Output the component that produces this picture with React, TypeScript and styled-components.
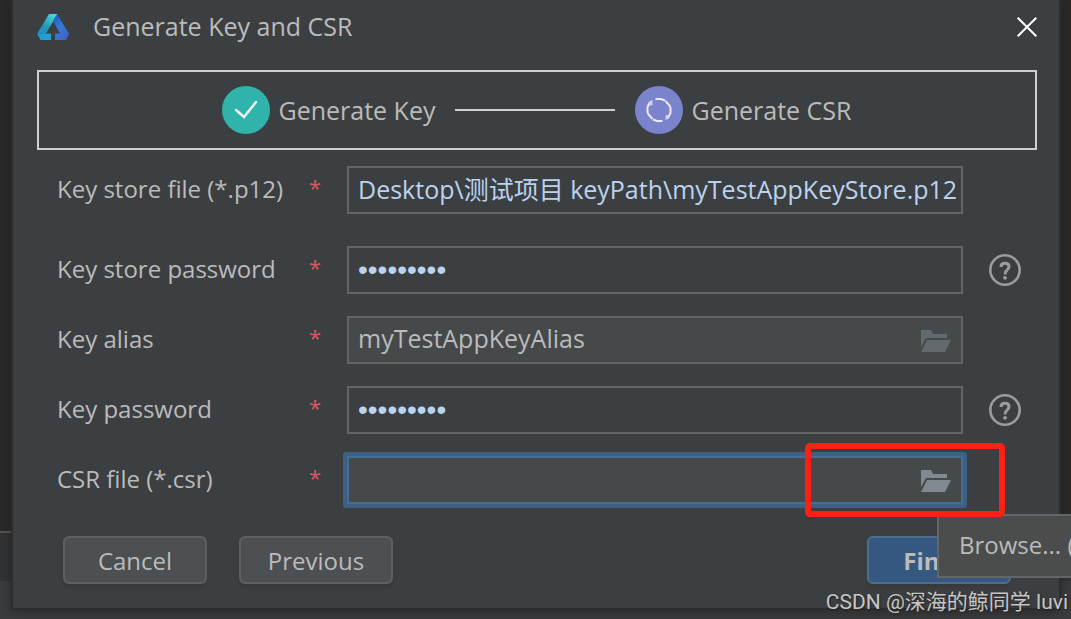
import React from "react";
import styled, { createGlobalStyle, css } from "styled-components";

const GlobalStyle = createGlobalStyle`
  * { box-sizing: border-box; }
  body { margin: 0; background: #3a3c3e; }
  body, button, input {
    font-family: "Open Sans", "Noto Sans CJK SC", sans-serif;
    font-size: 25px;
    line-height: 34px;
    color: #bbbbbb;
  }
`;

const Desktop = styled.div`
  position: relative;
  min-height: 100vh;
  overflow: hidden;
  padding: 0 12px 12px 13px;
  background: linear-gradient(to top, #3a3c3e 39px, #313335 39px, #313335 87px, #555555 87px, #555555 89px, #2b2b2b 89px);
`;

const Dialog = styled.form`
  display: flex;
  flex-direction: column;
  min-height: calc(100vh - 12px);
  padding: 0 22px 24px 24px;
  background: #3c3f41;
  box-shadow: 0 0 0 2px #2c2d2e, 0 2px 12px 2px rgba(0, 0, 0, 0.3);
`;

const TitleBar = styled.header`
  display: flex;
  align-items: center;
  height: 54px;
  gap: 24px;
`;

const Title = styled.h1`
  flex: 1;
  margin: 0;
  padding-bottom: 2px;
  font-size: 25px;
  font-weight: 400;
`;

const CloseButton = styled.button`
  display: flex;
  padding: 0;
  border: 0;
  background: none;
`;

const Steps = styled.ol`
  display: flex;
  align-items: center;
  justify-content: center;
  gap: 20px;
  height: 80px;
  margin: 16px 0 0;
  padding: 0;
  border: 2px solid #cfcfcf;
  list-style: none;
`;

const Step = styled.li`
  display: flex;
  align-items: center;
  gap: 8px;
`;

const StepLine = styled.li`
  width: 160px;
  height: 2px;
  background: #cfcfcf;
`;

const Fields = styled.div`
  display: flex;
  flex-direction: column;
  gap: 22px;
  padding: 16px 16px 0 20px;
`;

const FieldRow = styled.div<{ $spaced?: boolean }>`
  display: grid;
  grid-template-columns: 252px 38px 1fr 58px;
  align-items: center;
  height: 48px;
  margin-bottom: ${(p) => (p.$spaced ? "10px" : "0")};
`;

const Label = styled.label`
  padding-bottom: 2px;
  font-size: 24px;
  white-space: nowrap;
`;

const Required = styled.span`
  padding-bottom: 6px;
  font-size: 22px;
  color: #db5860;
`;

const InputWrap = styled.div`
  position: relative;
  display: flex;
`;

const TextInput = styled.input<{ $filled?: boolean; $focused?: boolean }>`
  width: 100%;
  height: 48px;
  padding: 0 4px 4px 9px;
  border: 2px solid #646464;
  border-radius: 0;
  outline: none;
  background: ${(p) => (p.$filled ? "#45494a" : "#3c3f41")};
  color: ${(p) => (p.$filled ? "#bbbbbb" : "#bbd3ee")};
  &[type="password"] {
    padding-bottom: 0;
    font-family: "Liberation Sans", sans-serif;
    font-size: 28px;
  }
  ${(p) =>
    p.$focused &&
    css`
      border-color: #466d94;
      box-shadow: 0 0 0 4px #3d6185;
      border-radius: 1px;
    `}
`;

const BrowseButton = styled.button<{ $dim?: boolean }>`
  position: absolute;
  top: 14px;
  right: 12px;
  display: flex;
  padding: 0;
  border: 0;
  background: none;
  color: ${(p) => (p.$dim ? "#616a6e" : "#7f8b91")};
`;

const HelpButton = styled.button`
  display: flex;
  justify-self: end;
  padding: 0;
  border: 0;
  background: none;
`;

const Highlight = styled.div`
  position: absolute;
  z-index: 3;
  top: -13px;
  right: -42px;
  width: 200px;
  height: 74px;
  border: 6px solid #ff2015;
  border-radius: 5px;
  pointer-events: none;
`;

const Footer = styled.footer`
  display: flex;
  gap: 32px;
  padding: 32px 26px 0;
`;

const Button = styled.button<{ $primary?: boolean; $wide?: boolean }>`
  width: ${(p) => (p.$wide ? "154px" : "144px")};
  height: 48px;
  padding: 2px 0 0;
  border: 2px solid ${(p) => (p.$primary ? "#4c708c" : "#5e6060")};
  border-radius: 6px;
  background: ${(p) => (p.$primary ? "#365880" : "#4c5052")};
  box-shadow: 0 3px 2px rgba(50, 50, 50, 0.4);
  font-size: 24px;
  font-weight: ${(p) => (p.$primary ? 700 : 400)};
`;

const FinishArea = styled.div`
  position: relative;
  margin-left: auto;
`;

const Tooltip = styled.div`
  position: absolute;
  z-index: 2;
  top: -22px;
  left: 70px;
  width: 200px;
  height: 64px;
  padding: 12px 20px;
  border: 2px solid #646566;
  background: #4b4d4d;
  font-size: 24px;
  white-space: nowrap;
`;

const Watermark = styled.div`
  position: absolute;
  z-index: 4;
  right: 3px;
  bottom: 3px;
  font-family: Roboto, "Noto Sans CJK SC", sans-serif;
  font-size: 21px;
  line-height: 30px;
  color: #c6c6c6;
  text-shadow: 1px 1px 2px #222222;
  white-space: nowrap;
`;

const Logo = () => (
  <svg width="32" height="26" viewBox="0 0 32 26" aria-hidden="true">
    <defs>
      <linearGradient id="limbLeft" x1="1" y1="0" x2="0.2" y2="1">
        <stop offset="0" stopColor="#4fe3e6" />
        <stop offset="0.7" stopColor="#2293b5" />
        <stop offset="1" stopColor="#1d93cb" />
      </linearGradient>
      <linearGradient id="limbRight" x1="0" y1="0" x2="0.8" y2="1">
        <stop offset="0" stopColor="#1d56b8" />
        <stop offset="0.5" stopColor="#3579dc" />
        <stop offset="1" stopColor="#4163c4" />
      </linearGradient>
    </defs>
    <path d="M12 0H20.5L9 19.5H0.3Z" fill="url(#limbLeft)" />
    <path d="M0 19.5H14V26H3.5Z" fill="#1f9fd2" />
    <path d="M20 0L32 20L29 26H18V19.5H23L16 7Z" fill="url(#limbRight)" />
  </svg>
);

const CheckIcon = () => (
  <svg width="48" height="48" viewBox="0 0 48 48" aria-hidden="true">
    <circle cx="24" cy="24" r="24" fill="#2fb3aa" />
    <path d="M14 24L22 31L34 16" fill="none" stroke="#f2fbfa" strokeWidth="2.4" strokeLinecap="round" />
  </svg>
);

const ProgressIcon = () => (
  <svg width="48" height="48" viewBox="0 0 48 48" aria-hidden="true">
    <circle cx="24" cy="24" r="24" fill="#7c83cd" />
    <g fill="none" stroke="#e9eaf8" strokeWidth="2">
      <path d="M20.5 13H26L30 14.5" />
      <path d="M30.5 15L34.5 19.5L35.5 22V27L33 32" />
      <path d="M27.5 35H22L18 33.5" />
      <path d="M17.5 33L13.5 28.5L12.5 26V21L15 16" />
    </g>
    <path d="M14 15.5L17.5 14V19L14 20ZM30.5 29.5L34 28.5V32.5L30.5 34Z" fill="#cdd0ee" />
  </svg>
);

const FolderIcon = () => (
  <svg width="30" height="22" viewBox="0 0 30 22" fill="currentColor" aria-hidden="true">
    <path d="M0 0H10L12 4H26V8H5L0 17Z" />
    <path d="M6 10H30L24 22H0Z" />
  </svg>
);

const HelpIcon = () => (
  <svg width="32" height="32" viewBox="0 0 32 32" fill="none" stroke="#9c9c9c" aria-hidden="true">
    <circle cx="16" cy="16" r="14.7" strokeWidth="2.6" />
    <path d="M12 13Q12 9.2 16 9.2Q20 9.2 20 12.6Q20 14.6 18 16.2Q16 17.6 16 20.4" strokeWidth="3" />
    <circle cx="16" cy="23.8" r="1.9" fill="#9c9c9c" stroke="none" />
  </svg>
);

const CloseIcon = () => (
  <svg width="20" height="20" viewBox="0 0 20 20" aria-hidden="true">
    <path d="M0.7 0.7L19.3 19.3M19.3 0.7L0.7 19.3" stroke="#ffffff" strokeWidth="2" />
  </svg>
);

type Field = {
  id: string;
  label: string;
  value: string;
  type?: string;
  spaced?: boolean;
  filled?: boolean;
  focused?: boolean;
  help?: boolean;
};

const fields: Field[] = [
  {
    id: "store",
    label: "Key store file (*.p12)",
    value: "Desktop\\测试项目 keyPath\\myTestAppKeyStore.p12",
    spaced: true,
  },
  { id: "store-password", label: "Key store password", value: "password1", type: "password", help: true },
  { id: "alias", label: "Key alias", value: "myTestAppKeyAlias", filled: true },
  { id: "key-password", label: "Key password", value: "password1", type: "password", help: true },
  { id: "csr", label: "CSR file (*.csr)", value: "", filled: true, focused: true },
];

export default function App() {
  return (
    <Desktop>
      <GlobalStyle />
      <Dialog onSubmit={(e: React.FormEvent) => e.preventDefault()}>
        <TitleBar>
          <Logo />
          <Title>Generate Key and CSR</Title>
          <CloseButton type="button" aria-label="Close">
            <CloseIcon />
          </CloseButton>
        </TitleBar>
        <Steps>
          <Step>
            <CheckIcon />
            Generate Key
          </Step>
          <StepLine aria-hidden="true" />
          <Step>
            <ProgressIcon />
            Generate CSR
          </Step>
        </Steps>
        <Fields>
          {fields.map((f) => (
            <FieldRow key={f.id} $spaced={f.spaced}>
              <Label htmlFor={f.id}>{f.label}</Label>
              <Required>*</Required>
              <InputWrap>
                <TextInput
                  id={f.id}
                  type={f.type ?? "text"}
                  defaultValue={f.value}
                  $filled={f.filled}
                  $focused={f.focused}
                />
                {f.filled && (
                  <BrowseButton type="button" aria-label="Browse" $dim={!f.focused}>
                    <FolderIcon />
                  </BrowseButton>
                )}
                {f.focused && <Highlight />}
              </InputWrap>
              {f.help && (
                <HelpButton type="button" aria-label="Help">
                  <HelpIcon />
                </HelpButton>
              )}
            </FieldRow>
          ))}
        </Fields>
        <Footer>
          <Button type="button">Cancel</Button>
          <Button type="button" $wide>
            Previous
          </Button>
          <FinishArea>
            <Button type="submit" $primary>
              Finish
            </Button>
            <Tooltip role="tooltip">Browse... (</Tooltip>
          </FinishArea>
        </Footer>
      </Dialog>
      <Watermark>CSDN @深海的鲸同学 luvi</Watermark>
    </Desktop>
  );
}
